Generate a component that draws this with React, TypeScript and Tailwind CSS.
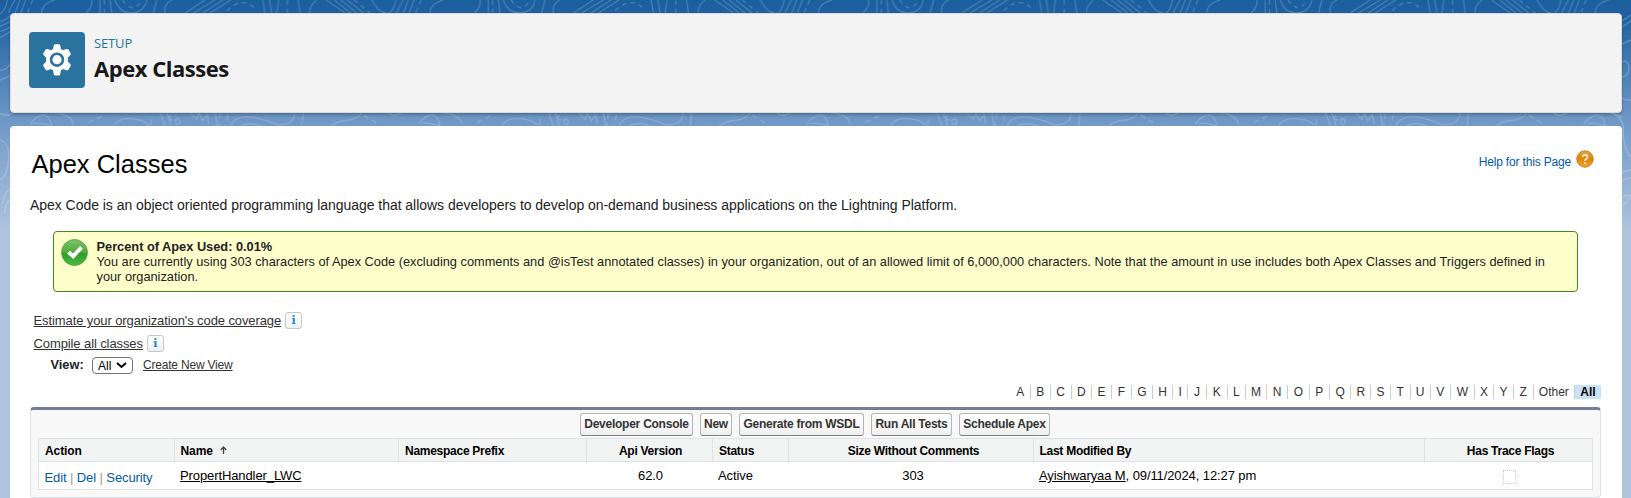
import React from "react";

const ARIAL = "font-['Liberation_Sans',Arial,sans-serif]";

function Backdrop() {
  return (
    <svg className="absolute inset-0 h-[498px] w-[1631px]" viewBox="0 0 1631 498" fill="none">
      <defs>
        <linearGradient id="sky" x1="0" y1="0" x2="0" y2="1">
          <stop offset="0" stopColor="#1b5f9e" />
          <stop offset="0.06" stopColor="#1f60a0" />
          <stop offset="0.5" stopColor="#6c96c5" />
          <stop offset="1" stopColor="#b0c4df" />
        </linearGradient>
        <pattern id="topo" width="388.4" height="250" patternUnits="userSpaceOnUse">
          <g transform="scale(.3334)" stroke="#fff" strokeOpacity=".18" strokeWidth="4" fill="none">
            <path d="M22 0Q18 30 0 42M45 0Q35 15 25 39M60 0L45 39M77 0L62 39M165 0Q125 10 125 39M275 0Q278 22 258 39M300 0V39M330 0L335 39M345 0Q358 38 392 39Q432 38 440 0M470 0L460 39M515 0Q490 12 495 39M615 0L555 39M645 0L580 39M668 0L608 39M692 0L630 39M788 0L795 39M808 0L815 39M836 0L830 39M894 0L900 39M950 0Q925 20 930 39M978 0L1035 39M1003 0L1052 39M1022 0L1070 39M1042 0L1090 39M1115 0Q1135 38 1158 39M1165 38Q1182 25 1187 0" />
            <path strokeDasharray="14 12" d="M98 0L82 39M313 0V39M368 0Q385 24 400 24Q418 18 422 0M680 32Q732 -16 770 32M862 0V39M1062 0L1110 39" />
            <path d="M0 340Q20 354 45 334M90 372Q110 345 135 345Q153 355 155 380M100 370Q125 366 160 380M155 336Q215 343 220 372M340 380Q350 356 385 355Q430 357 446 375M455 358L452 377M480 336L496 380M500 336L513 380M525 365Q532 345 540 365Q534 384 525 365M512 344L507 358L518 360M572 340L590 358L597 340L608 362L622 345L626 370M645 336L652 380M690 380Q700 352 740 350Q780 353 830 373Q880 380 885 336M720 380Q745 362 790 380M910 336L905 380M990 380Q1010 362 1050 360Q1080 352 1084 338" />
            <path strokeDasharray="17 12" d="M265 368L310 346M660 340L656 380M684 345L676 380M1090 345L1135 372" />
            <path d="M0 65Q20 60 35 42M0 78Q22 72 35 60M0 95Q20 90 35 78M0 112Q18 105 32 94M0 212Q20 210 32 190M0 240Q18 236 32 225M0 418Q30 432 26 480Q22 530 0 540M8 610Q10 580 32 565M14 640Q15 610 32 595" />
          </g>
        </pattern>
      </defs>
      <rect width="1631" height="498" fill="#b0c4df" />
      <rect width="1631" height="232" fill="url(#sky)" />
      <rect width="1622" height="232" fill="url(#topo)" />
      <g stroke="#fff" strokeOpacity=".22" strokeWidth="1.4">
        <path d="M1622 21l9-6M1622 27l9-6M1622 44l9-4M1622 62q6-3 7 6q0 8-7 9M1622 98q5 3 9 2M1611 113q14 4 12 20q2 20 8 24M1622 173q4-3 9-3M1622 181q4-3 9-3M1622 198q4-4 9-2M1622 206q6-4 9-12" />
      </g>
    </svg>
  );
}

function Gear() {
  return (
    <svg className="h-8 w-[30px]" viewBox="0 0 30 32">
      <path
        fill="#fff"
        stroke="#fff"
        strokeWidth="2.8"
        strokeLinejoin="round"
        d="M13.200 1.600h3.600l1 4.600q1.600.5 3 1.500l4.400-1.400 2.200 3.700-3.100 3.300q.4 2.300 0 4.600l3.100 3.300-2.200 3.800-4.400-1.400q-1.400 1-3 1.500l-1 5.100h-3.600l-1-5.100q-1.600-.5-3-1.500l-4.400 1.400-2.200-3.800 3.100-3.300q-.4-2.300 0-4.600L2.600 10l2.200-3.700 4.400 1.400q1.400-1 3-1.500z"
      />
      <circle cx="15" cy="15.700" r="5.900" fill="#fff" stroke="#2a739e" strokeWidth="2.600" />
    </svg>
  );
}

function InfoBadge() {
  return (
    <span className="flex h-[17px] w-[17px] items-center justify-center rounded-[3px] border border-[#c4c7cb] bg-gradient-to-b from-white to-[#eef1f4] font-['DejaVu_Serif',serif] text-[11px] font-bold leading-none text-[#2482cf]">
      i
    </span>
  );
}

const letters: [string, number][] = [
  ["A", 20], ["B", 20], ["C", 21], ["D", 20.500], ["E", 19.700], ["F", 20], ["G", 21], ["H", 20.300], ["I", 15], ["J", 18.500],
  ["K", 21], ["L", 18.200], ["M", 21.300], ["N", 21], ["O", 21.500], ["P", 20.300], ["Q", 21.300], ["R", 20], ["S", 19.400], ["T", 20],
  ["U", 19.900], ["V", 20.500], ["W", 23.700], ["X", 19.400], ["Y", 19.600], ["Z", 19.900], ["Other", 41.400],
];

const buttons: [string, string][] = [
  ["Developer Console", "w-[113px]"],
  ["New", "w-8"],
  ["Generate from WSDL", "w-[125px]"],
  ["Run All Tests", "w-[81px]"],
  ["Schedule Apex", "w-[91px]"],
];

const COLS = "grid grid-cols-[136px_224px_188px_126px_76px_245px_391px_1fr]";

export default function App() {
  return (
    <div className={`relative h-[498px] w-[1631px] overflow-hidden ${ARIAL}`}>
      <Backdrop />
      <div className="relative flex h-full flex-col pl-[10px] pr-[9px] pt-[13px]">
        <header className="flex h-[100px] shrink-0 rounded border border-[#dddbda] bg-[#f3f3f3] pl-[18px] pt-[18px] shadow-[0_2px_3px_rgba(0,0,0,0.25)]">
          <div className="flex h-14 w-14 items-center justify-center rounded bg-[#2a739e]">
            <Gear />
          </div>
          <div className="ml-[9px] font-['Open_Sans','Noto_Sans',sans-serif]">
            <p className="h-[22px] text-[13px] leading-[22px] tracking-[-0.15px] text-[#2a739e]">SETUP</p>
            <h1 className="text-[22px] font-bold leading-[29px] tracking-[-0.470px] text-[#181818]">Apex Classes</h1>
          </div>
        </header>

        <main className="mt-[13px] flex-1 rounded-t bg-white pl-5 pr-[21px]">
          <div className="flex h-[68px] justify-between">
            <h2 className="pl-[1.500px] pt-[23px] text-[25.500px] leading-[30px] text-black">Apex Classes</h2>
            <div className="flex pr-[7px] pt-6">
              <a className="pt-1 text-[12px] leading-[16px] tracking-[-0.170px] text-[#015ba7]">Help for this Page</a>
              <svg className="ml-[5px] h-[18px] w-[18px]" viewBox="0 0 18 18">
                <defs>
                  <linearGradient id="help" x1="0" y1="0" x2="0" y2="1">
                    <stop offset="0" stopColor="#e2a549" />
                    <stop offset=".5" stopColor="#e08508" />
                    <stop offset="1" stopColor="#f5a623" />
                  </linearGradient>
                </defs>
                <circle cx="9" cy="9" r="8.300" fill="url(#help)" stroke="#b5711c" strokeWidth=".7" />
                <path d="M6.600 7q.2-2.200 2.500-2.200t2.400 2.100q0 1.200-1.300 2T9 11M9 12.200v1.700" fill="none" stroke="#fff3d8" strokeWidth="1.700" />
              </svg>
            </div>
          </div>

          <p className="h-[37px] pt-[3px] text-[14px] leading-[17px] tracking-[-0.036px] text-[#222]">
            Apex Code is an object oriented programming language that allows developers to develop on-demand business applications on the Lightning Platform.
          </p>

          <section className="ml-[23px] flex h-[61px] w-[1525px] rounded border border-[#3c8b1e] bg-[#ffffcc] pl-[7px] pt-[7px]">
            <svg className="h-7 w-7 shrink-0" viewBox="0 0 28 28">
              <defs>
                <linearGradient id="ok" x1="0" y1="0" x2="0" y2="1">
                  <stop offset="0" stopColor="#7fc06a" />
                  <stop offset=".5" stopColor="#4cab3d" />
                  <stop offset=".52" stopColor="#2f9b28" />
                  <stop offset="1" stopColor="#4cba3c" />
                </linearGradient>
              </defs>
              <circle cx="13.500" cy="13.500" r="13" fill="url(#ok)" stroke="#4e9e43" strokeWidth=".8" />
              <path d="M6 14.500l3-2.800 3 2.800 7-7.500 2.800 2.800L12.300 20z" fill="#fff" />
            </svg>
            <div className="ml-[7.500px] text-[12.790px] leading-[15px] text-[#222]">
              <h4 className="font-bold">Percent of Apex Used: 0.01%</h4>
              <p className="whitespace-nowrap">
                You are currently using 303 characters of Apex Code (excluding comments and @isTest annotated classes) in your organization, out of an allowed limit of 6,000,000 characters. Note that the amount in use includes both Apex Classes and Triggers defined in
                <br />
                your organization.
              </p>
            </div>
          </section>

          <div className="mt-5 flex h-[23px] items-start pl-[3.500px] text-[13px] leading-[18px] tracking-[-0.1px] text-[#333]">
            <a className="mr-[4px] underline">Estimate your organization's code coverage</a>
            <InfoBadge />
          </div>
          <div className="flex h-[22px] items-start pl-[3.500px] text-[13px] leading-[18px] tracking-[-0.1px] text-[#333]">
            <a className="mr-[4px] underline">Compile all classes</a>
            <InfoBadge />
          </div>
          <div className="flex h-[28px] items-start pl-[20.500px] text-[12px] leading-[16px] text-[#333]">
            <label className="w-[41.500px] text-[12.800px] font-bold text-[#222]">View:</label>
            <span className="flex h-[17px] w-[41px] items-center rounded-sm border border-[#767676] bg-white pl-[5px] text-black">
              All
              <svg className="ml-[5px] h-[7px] w-[11px]" viewBox="0 0 11 7">
                <path d="M1 1l4.500 4L10 1" fill="none" stroke="#000" strokeWidth="2" />
              </svg>
            </span>
            <a className="ml-[10px] tracking-[-0.2px] underline">Create New View</a>
          </div>

          <nav className="flex h-[14px] justify-end text-[12px] leading-[14px] text-[#333]">
            {letters.map(([label, width]) => (
              <a key={label} className="border-r border-[#ccc] text-center" style={{ width }}>
                {label}
              </a>
            ))}
            <a className="w-[26px] bg-[#c9e1fa] text-center font-bold text-black">All</a>
          </nav>

          <section className="mt-2 h-[91px] rounded border border-t-[3px] border-[#e0e3e5] border-t-[#747e96] bg-[#f8f8f8] px-[7px]">
            <div className="flex h-7 justify-center gap-[7px] pr-px pt-[3px]">
              {buttons.map(([label, width]) => (
                <button
                  key={label}
                  className={`${width} h-[23px] shrink-0 whitespace-nowrap rounded-[3px] border border-[#b5b5b5] border-b-[#7f7f7f] bg-gradient-to-b from-white to-[#f0f0f0] px-0 text-[12px] font-bold leading-[19px] tracking-[-0.250px] text-[#333]`}
                >
                  {label}
                </button>
              ))}
            </div>
            <div className="h-[52px] border border-[#e0e3e5] bg-white text-black">
              <div className={`${COLS} h-[23px] border-b border-[#e0e3e5] bg-[#f2f3f3] text-[12px] font-bold leading-[24px] tracking-[-0.270px]`}>
                <span className="border-r border-[#e0e3e5] pl-[6px] tracking-[-0.1px]">Action</span>
                <span className="flex border-r border-[#e0e3e5] pl-[5.500px] tracking-[-0.1px]">
                  Name
                  <svg className="ml-[7px] mt-[7px] h-2 w-[7px]" viewBox="0 0 7 8">
                    <path d="M3.500 8V1.500M.8 4l2.700-3 2.700 3" fill="none" stroke="#444" strokeWidth="1.300" />
                  </svg>
                </span>
                <span className="border-r border-[#e0e3e5] pl-[6px]">Namespace Prefix</span>
                <span className="border-r border-[#e0e3e5] pl-[2px] text-center">Api Version</span>
                <span className="border-r border-[#e0e3e5] pl-[6px]">Status</span>
                <span className="border-r border-[#e0e3e5] pl-[5px] text-center">Size Without Comments</span>
                <span className="border-r border-[#e0e3e5] pl-[5.500px]">Last Modified By</span>
                <span className="pl-[4px] text-center">Has Trace Flags</span>
              </div>
              <div className={`${COLS} text-[13px] leading-[27px] tracking-[-0.1px]`}>
                <span className="pl-[5.500px] pt-0.5 text-[#015ba7]">
                  Edit <i className="not-italic text-[#999]">|</i> Del <i className="not-italic text-[#999]">|</i> Security
                </span>
                <span className="pl-[5px] underline">PropertHandler_LWC</span>
                <span />
                <span className="pl-px text-center">62.0</span>
                <span className="pl-[5px]">Active</span>
                <span className="pl-[3px] text-center">303</span>
                <span className="pl-[5px]">
                  <a className="underline">Ayishwaryaa M</a>, 09/11/2024, 12:27 pm
                </span>
                <span className="flex justify-center pl-px pt-2">
                  <i className="h-[14px] w-[13px] border border-dotted border-[#ccc]" />
                </span>
              </div>
            </div>
          </section>
        </main>
      </div>
    </div>
  );
}
